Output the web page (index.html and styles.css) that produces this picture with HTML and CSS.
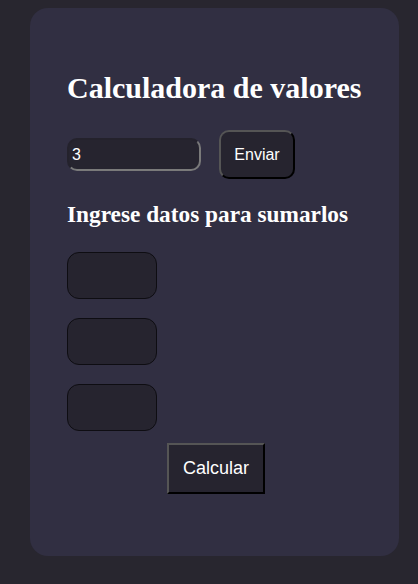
FILE: index.html
```html
<!DOCTYPE html>
<html lang="es">
<head>
<meta charset="utf-8">
<title>Calculadora de valores</title>
<link rel="stylesheet" href="styles.css">
</head>
<body>
<main class="card">
  <h1 class="title">Calculadora de valores</h1>
  <div class="count-row">
    <input class="count-input" type="text" value="3">
    <button class="btn-send">Enviar</button>
  </div>
  <h2 class="subtitle">Ingrese datos para sumarlos</h2>
  <div class="fields">
    <input class="num-input" type="text">
    <input class="num-input" type="text">
    <input class="num-input" type="text">
  </div>
  <button class="btn-calc">Calcular</button>
</main>
</body>
</html>
```

FILE: styles.css
```css
html, body {
  margin: 0;
  background: #28262f;
}
body {
  padding: 8px 19px 28px 30px;
}
.card {
  box-sizing: border-box;
  height: 548px;
  background: #312f42;
  border-radius: 18px;
  padding: 63px 37px 62px 37px;
  display: flex;
  flex-direction: column;
  align-items: flex-start;
}
.title {
  margin: 0;
  font-family: "Liberation Serif", "Times New Roman", serif;
  font-weight: bold;
  font-size: 30px;
  line-height: 34px;
  color: #ffffff;
}
.count-row {
  margin-top: 25px;
  display: flex;
  align-items: center;
  gap: 18px;
}
.count-input {
  box-sizing: border-box;
  width: 134px;
  height: 33px;
  margin: 0;
  padding: 0 3px;
  background: #26242f;
  color: #ffffff;
  font-family: "Liberation Sans", Arial, sans-serif;
  font-size: 16px;
  border: 2px solid;
  border-color: #24222c #7a7a7a #7a7a7a #24222c;
  border-radius: 10px;
  outline: none;
}
.btn-send {
  box-sizing: border-box;
  width: 76px;
  height: 49px;
  margin: 0;
  padding: 0;
  background: #26242f;
  color: #ffffff;
  font-family: "Liberation Sans", Arial, sans-serif;
  font-size: 16px;
  border: 2px solid;
  border-color: #555555 #000000 #000000 #555555;
  border-radius: 10px;
}
.subtitle {
  margin: 22px 0 0 0;
  font-family: "Liberation Serif", "Times New Roman", serif;
  font-weight: bold;
  font-size: 23.3px;
  line-height: 27px;
  color: #ffffff;
}
.fields {
  margin-top: 24px;
  display: flex;
  flex-direction: column;
  gap: 19px;
}
.num-input {
  box-sizing: border-box;
  width: 90px;
  height: 47px;
  margin: 0;
  background: #26242f;
  color: #ffffff;
  border: 1px solid #0e0d12;
  border-radius: 12px;
  outline: none;
}
.btn-calc {
  box-sizing: border-box;
  align-self: center;
  margin: 12px 0 0 3px;
  width: 98px;
  height: 51px;
  padding: 0;
  background: #26242f;
  color: #ffffff;
  font-family: "Liberation Sans", Arial, sans-serif;
  font-size: 18px;
  border: 2px solid;
  border-color: #555555 #000000 #000000 #555555;
  border-radius: 0;
}
```
